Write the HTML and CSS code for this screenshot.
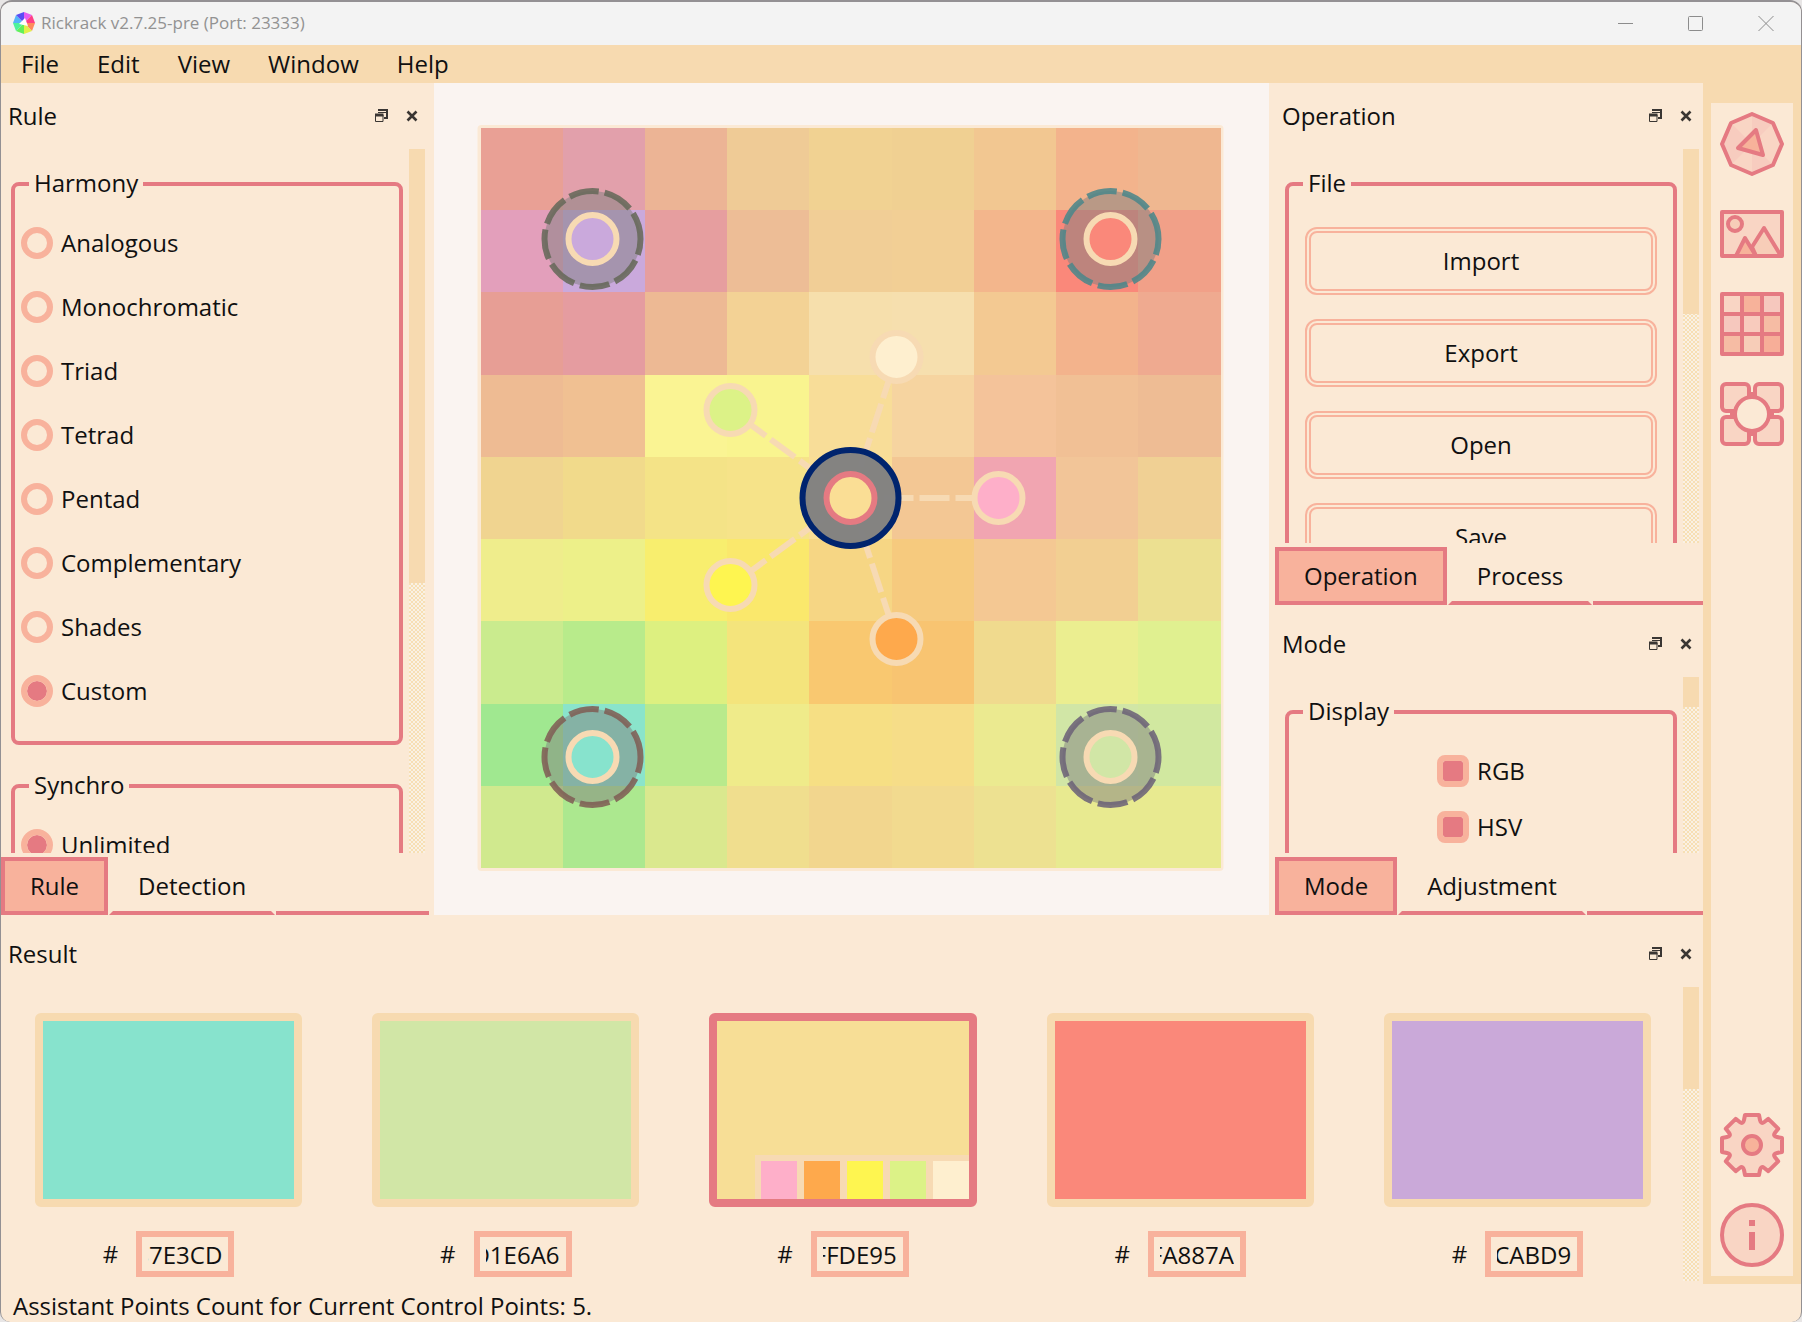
FILE: index.html
```html
<!DOCTYPE html>
<html lang="en">
<head>
<meta charset="utf-8">
<title>Rickrack v2.7.25-pre (Port: 23333)</title>
<link rel="stylesheet" href="styles.css">
</head>
<body>
<svg class="defs" aria-hidden="true">
  <symbol id="float" viewBox="0 0 14 14"><path d="M4 1h9v8h-3" fill="none" stroke="#3a3633" stroke-width="2"/><path d="M4 3.500h9" stroke="#3a3633" stroke-width="1"/><path d="M1.500 6h7.500v6.500H1.500z" fill="none" stroke="#3a3633" stroke-width="1"/><path d="M1 6h8.500" stroke="#3a3633" stroke-width="3"/></symbol>
  <symbol id="close" viewBox="0 0 14 14"><path d="M2.500 2.500l9 9M11.500 2.500l-9 9" stroke="#3a3633" stroke-width="2.600" fill="none"/></symbol>
</svg>
<div class="window">
  <header class="titlebar">
    <svg class="app-icon" viewBox="-12 -12 24 24" aria-hidden="true">
      <path d="M0 0L0-11 8-8Z" fill="#e75cf0"/><path d="M0 0L8-8 11 0Z" fill="#ff3f86"/><path d="M0 0L11 0 8 8Z" fill="#ff8a5c"/><path d="M0 0L8 8 0 11Z" fill="#e2f04a"/><path d="M0 0L0 11-8 8Z" fill="#62f05a"/><path d="M0 0L-8 8-11 0Z" fill="#4df29a"/><path d="M0 0L-11 0-8-8Z" fill="#55b4f8"/><path d="M0 0L-8-8 0-11Z" fill="#5a4cf5"/>
      <path d="M1-5L4 3-5 1Z" fill="#fff"/>
    </svg>
    <h1 class="title">Rickrack v2.7.25-pre (Port: 23333)</h1>
    <button class="win-btn" aria-label="Minimize"><svg viewBox="0 0 16 16"><path d="M0 8.500h15"/></svg></button>
    <button class="win-btn" aria-label="Maximize"><svg viewBox="0 0 16 16"><rect x=".5" y="1.500" width="14" height="14" rx="1"/></svg></button>
    <button class="win-btn" aria-label="Close"><svg viewBox="0 0 16 16"><path d="M.5 1l15 15M15.500 1L.5 16"/></svg></button>
  </header>
  <nav class="menubar">
    <button>File</button><button>Edit</button><button>View</button><button>Window</button><button>Help</button>
  </nav>
  <main class="main">
    <section class="dock dock-left">
      <div class="panel grow">
        <header class="panel-head"><h2>Rule</h2><button aria-label="Float"><svg><use href="#float"/></svg></button><button aria-label="Close"><svg><use href="#close"/></svg></button></header>
        <div class="scroll">
          <div class="content">
            <fieldset class="radios">
              <legend>Harmony</legend>
              <label><input type="radio" name="harmony">Analogous</label>
              <label><input type="radio" name="harmony">Monochromatic</label>
              <label><input type="radio" name="harmony">Triad</label>
              <label><input type="radio" name="harmony">Tetrad</label>
              <label><input type="radio" name="harmony">Pentad</label>
              <label><input type="radio" name="harmony">Complementary</label>
              <label><input type="radio" name="harmony">Shades</label>
              <label><input type="radio" name="harmony" checked>Custom</label>
            </fieldset>
            <fieldset class="radios">
              <legend>Synchro</legend>
              <label><input type="radio" name="synchro" checked>Unlimited</label>
            </fieldset>
          </div>
          <div class="track"><div class="thumb" style="height:61.600%"></div></div>
        </div>
        <div class="tabs"><button class="active">Rule</button><button>Detection</button><span></span></div>
      </div>
    </section>

    <section class="canvas">
      <svg class="board" viewBox="0 0 746 746" aria-label="Colour board">
        <rect width="746" height="746" rx="4" fill="#fbe9d5"/>
        <g id="cells" shape-rendering="crispEdges"></g>
        <g transform="translate(373 373)">
          <g class="spokes"><path d="M0 0H148"/><path d="M0 0L46-141"/><path d="M0 0L46 141"/><path d="M0 0L-120-88"/><path d="M0 0L-120 88"/></g>
          <g class="point"><circle cx="148" r="24" fill="#feafc9"/><circle cx="46" cy="-141" r="24" fill="#feefcf"/><circle cx="46" cy="141" r="24" fill="#fea94c"/><circle cx="-120" cy="-88" r="24" fill="#dcf287"/><circle cx="-120" cy="87" r="24" fill="#fef550"/></g>
          <circle r="48" fill="#808080" fill-opacity=".97" stroke="#00246e" stroke-width="6"/>
          <circle r="24" fill="#fade95" stroke="#e57a82" stroke-width="6"/>
          <g class="control" transform="translate(-258 -259)"><circle r="48"/><path d="M48 0A48 48 0 1 0-48 0A48 48 0 1 0 48 0" stroke="#66695a"/><circle class="core" r="24" fill="#caa9dc"/></g>
          <g class="control" transform="translate(260 -259)"><circle r="48"/><path d="M48 0A48 48 0 1 0-48 0A48 48 0 1 0 48 0" stroke="#4c868a"/><circle class="core" r="24" fill="#fa887a"/></g>
          <g class="control" transform="translate(-258 259)"><circle r="48"/><path d="M48 0A48 48 0 1 0-48 0A48 48 0 1 0 48 0" stroke="#805f55"/><circle class="core" r="24" fill="#87e3cd"/></g>
          <g class="control" transform="translate(260 259)"><circle r="48"/><path d="M48 0A48 48 0 1 0-48 0A48 48 0 1 0 48 0" stroke="#6c6378"/><circle class="core" r="24" fill="#d1e6a6"/></g>
        </g>
      </svg>
    </section>

    <section class="dock dock-right">
      <div class="panel grow">
        <header class="panel-head"><h2>Operation</h2><button aria-label="Float"><svg><use href="#float"/></svg></button><button aria-label="Close"><svg><use href="#close"/></svg></button></header>
        <div class="scroll">
          <div class="content">
            <fieldset class="actions">
              <legend>File</legend>
              <button>Import</button><button>Export</button><button>Open</button><button>Save</button>
            </fieldset>
          </div>
          <div class="track"><div class="thumb" style="height:42%"></div></div>
        </div>
        <div class="tabs"><button class="active">Operation</button><button>Process</button><span></span></div>
      </div>
      <div class="panel mode">
        <header class="panel-head"><h2>Mode</h2><button aria-label="Float"><svg><use href="#float"/></svg></button><button aria-label="Close"><svg><use href="#close"/></svg></button></header>
        <div class="scroll">
          <div class="content">
            <fieldset class="checks">
              <legend>Display</legend>
              <label><input type="checkbox" checked>RGB</label>
              <label><input type="checkbox" checked>HSV</label>
            </fieldset>
          </div>
          <div class="track"><div class="thumb" style="height:17%"></div></div>
        </div>
        <div class="tabs"><button class="active">Mode</button><button>Adjustment</button><span></span></div>
      </div>
    </section>

    <section class="panel result">
      <header class="panel-head"><h2>Result</h2><button aria-label="Float"><svg><use href="#float"/></svg></button><button aria-label="Close"><svg><use href="#close"/></svg></button></header>
      <div class="scroll">
        <div class="cards">
          <div class="card"><div class="swatch teal"></div><label># <input value="87E3CD"></label></div>
          <div class="card"><div class="swatch lime"></div><label># <input value="D1E6A6"></label></div>
          <div class="card"><div class="swatch sand selected"><div class="strip"><i class="pink"></i><i class="orange"></i><i class="yellow"></i><i class="green"></i><i class="cream"></i></div></div><label># <input value="FFDE95"></label></div>
          <div class="card"><div class="swatch coral"></div><label># <input value="FA887A"></label></div>
          <div class="card"><div class="swatch violet"></div><label># <input value="CCABD9"></label></div>
        </div>
        <div class="track"><div class="thumb" style="height:34.700%"></div></div>
      </div>
    </section>

    <aside class="toolbar">
      <button aria-label="Wheel"><svg viewBox="-32 -32 64 64">
        <path d="M0-30L21-21 30 0 21 21 0 30-21 21-30 0-21-21Z" fill="#f9d5c4"/>
        <path d="M0 0L0-30 21-21ZM0 0L-30 0-21-21ZM0 0L0 30 21 21ZM0 0L-30 0-21 21Z" fill="#f6c8be" opacity=".75"/>
        <path class="line" d="M0-30L21-21 30 0 21 21 0 30-21 21-30 0-21-21Z"/>
        <path class="line deep" d="M4-14L-14 4 11 11Z"/></svg></button>
      <button aria-label="Image"><svg viewBox="-32 -32 64 64">
        <rect class="line pale" x="-30" y="-22" width="60" height="44"/>
        <circle class="line mid" cx="-17" cy="-10" r="7"/>
        <path class="line mid" d="M0 13L12-6 29 22H4Z"/><path class="line deep" d="M-16 22L-7 4 4 22Z"/></svg></button>
      <button aria-label="Board"><svg viewBox="-32 -32 64 64">
        <path d="M-30-30h20v20h-20z" fill="#f9d5c4"/><path d="M-10-30h20v20h-20z" fill="#f7b29a"/><path d="M10-30h20v20h-20z" fill="#f6c8be"/>
        <path d="M-30-10h20v20h-20z" fill="#f6c8be"/><path d="M-10-10h20v20h-20z" fill="#f8cbbd"/><path d="M10-10h20v20h-20z" fill="#f6bca4"/>
        <path d="M-30 10h20v20h-20z" fill="#f6bca4"/><path d="M-10 10h20v20h-20z" fill="#f7cdb8"/><path d="M10 10h20v20h-20z" fill="#f7ae98"/>
        <path class="line" d="M-30-30H30V30H-30ZM-10-30V30M10-30V30M-30-10H30M-30 10H30"/></svg></button>
      <button aria-label="Depot"><svg viewBox="-32 -32 64 64">
        <g class="line pale"><rect x="-30" y="-30" width="27" height="27" rx="4"/><rect x="3" y="-30" width="27" height="27" rx="4"/><rect x="-30" y="3" width="27" height="27" rx="4"/><rect x="3" y="3" width="27" height="27" rx="4"/></g>
        <path class="line" d="M0-22V-18M0 18V22M-22 0H-18M18 0H22"/>
        <circle class="line base" r="17"/></svg></button>
      <span class="spacer"></span>
      <button aria-label="Settings"><svg viewBox="-32 -32 64 64">
        <path class="line pale" d="M-7-30L7-30 8-25Q9-20.500 12.300-23L16.300-26.200 26.200-16.300 23-12.300Q20.500-9 25-8L30-7 30 7 25 8Q20.500 9 23 12.300L26.200 16.300 16.300 26.200 12.300 23Q9 20.500 8 25L7 30-7 30-8 25Q-9 20.500-12.300 23L-16.300 26.200-26.200 16.300-23 12.300Q-20.500 9-25 8L-30 7-30-7-25-8Q-20.500-9-23-12.300L-26.200-16.300-16.300-26.200-12.300-23Q-9-20.500-8-25Z"/>
        <circle class="line deep" r="9"/></svg></button>
      <button aria-label="About"><svg viewBox="-32 -32 64 64">
        <circle class="line pale" r="30"/><path d="M-3-15h6v6h-6zM-3-3h6v18h-6z" fill="#e57a82"/></svg></button>
    </aside>
  </main>
  <footer class="status">Assistant Points Count for Current Control Points: 5.</footer>
</div>
<script src="app.js"></script>
</body>
</html>
```
FILE: styles.css
```css
:root {
  --base: #fbe9d5;
  --sand: #f7dab0;
  --peach: #f8b29c;
  --rose: #e57a82;
}
* { box-sizing: border-box; }
body {
  margin: 0;
  background: #e8e6e6;
  color: #101010;
  font: 24px/32px "Open Sans", "Noto Sans", sans-serif;
}
button, input { font: inherit; color: inherit; }
button { padding: 0; border: 0; background: none; }
h1, h2 { margin: 0; font-size: inherit; font-weight: 400; }
.defs { display: none; }

.window {
  display: flex;
  flex-direction: column;
  height: 100vh;
  min-height: 900px;
  border: 1px solid #939093;
  border-top-width: 2px;
  border-bottom: 0;
  border-radius: 12px 12px 10px 10px;
  background: var(--base);
  overflow: hidden;
}

.titlebar {
  display: flex;
  align-items: center;
  flex: none;
  height: 43px;
  padding: 0 0 2px 11px;
  background: #f3f3f3;
}
.app-icon { width: 24px; height: 24px; margin-right: 5px; }
.title { flex: 1; font-size: 17px; line-height: 24px; color: #929292; }
.win-btn { display: grid; place-items: center; width: 70px; height: 40px; }
.win-btn svg { width: 16px; height: 16px; overflow: visible; fill: none; stroke: #8c8c8c; stroke-width: 1; }

.menubar {
  display: flex;
  flex: none;
  height: 38px;
  padding-left: 1px;
  background: var(--sand);
}
.menubar button { padding: 0 19px; }

.main {
  flex: 1;
  min-height: 0;
  display: grid;
  grid-template-columns: 433px minmax(0, 1fr) 434px 98px;
  grid-template-rows: minmax(0, 1fr) 369px;
}
.dock { display: flex; flex-direction: column; gap: 6px; min-height: 0; }
.dock-left { padding-right: 5px; }
.dock-right { padding-left: 6px; }
.panel { display: flex; flex-direction: column; min-height: 0; }
.grow { flex: 1; }
.mode { flex: none; height: 304px; }

.panel-head {
  display: flex;
  align-items: center;
  flex: none;
  height: 66px;
  padding: 0 10px 0 7px;
}
.panel-head h2 { flex: 1; }
.panel-head button { display: grid; place-items: center; width: 14px; height: 14px; margin-left: 17px; }
.panel-head svg { width: 14px; height: 14px; }

.scroll { display: flex; flex: 1; min-height: 0; padding-right: 4px; overflow: hidden; }
.content { flex: 1; padding: 19px 6px 0 10px; }
.track {
  width: 16px;
  background: repeating-conic-gradient(#f7dfb4 0 25%, #faf1e4 0 50%) 0 0 / 4px 4px;
}
.thumb { background: var(--sand); }

fieldset {
  display: flex;
  flex-direction: column;
  min-width: 0;
  margin: 0 0 25px;
  padding: 27px 6px 34px;
  border: 4px solid var(--rose);
  border-radius: 8px;
}
legend { margin-left: 8px; padding: 0 5px 2px; line-height: 30px; }
fieldset label { display: flex; align-items: center; gap: 8px; height: 32px; }
.radios { gap: 32px; }
.actions { gap: 24px; padding-left: 16px; padding-right: 16px; }
.actions legend { margin-left: -2px; }
.actions button {
  height: 68px;
  flex: none;
  border: 6px double var(--peach);
  border-radius: 12px;
}
.checks { display: grid; justify-content: center; gap: 24px; padding-bottom: 80px; }
input[type="radio"], input[type="checkbox"] {
  appearance: none;
  width: 32px;
  height: 32px;
  margin: 0;
  border: 6px solid var(--peach);
  border-radius: 16px;
}
input[type="checkbox"] { border-radius: 8px; }
input:checked { background: var(--rose) padding-box; }

.tabs { display: flex; flex: none; gap: 1px; height: 58px; margin-top: 4px; }
.tabs button {
  padding: 0 25px;
  border: 4px solid transparent;
  border-bottom-color: var(--rose);
}
.tabs .active { border-color: var(--rose); background: var(--peach); }
.tabs span { flex: 1; border-bottom: 4px solid var(--rose); }

.canvas { display: grid; padding: 42px 45px 44px 43px; background: #faf4f1; min-height: 0; }
.board { width: 100%; height: 100%; min-height: 0; }
.spokes { fill: none; stroke: #f7dab3; stroke-width: 6; stroke-dasharray: 30 6; stroke-dashoffset: 3; }
.point circle, .control .core { stroke: #f7dab3; stroke-width: 6; }
.control > circle:first-child { fill: #808080; fill-opacity: .5; }
.control path { fill: none; stroke-width: 6; stroke-opacity: .88; stroke-dasharray: 30 6; stroke-dashoffset: 3; }

.result { grid-column: 1 / 4; grid-row: 2; padding: 6px 0 3px; }
.cards {
  flex: 1;
  display: grid;
  grid-template-columns: repeat(5, minmax(0, 1fr));
  gap: 70px;
  padding: 26px 32px 0 34px;
}
.card { display: flex; flex-direction: column; align-items: center; gap: 24px; }
.swatch {
  display: flex;
  align-items: flex-end;
  justify-content: flex-end;
  width: 100%;
  height: 194px;
  flex: none;
  border: 8px solid var(--sand);
  border-radius: 6px;
}
.selected { border-color: var(--rose); }
.teal { background: #87e3cd padding-box; }
.lime { background: #d1e6a6 padding-box; }
.sand { background: #f7de96 padding-box; }
.coral { background: #fa887a padding-box; }
.violet { background: #caa9d9 padding-box; }
.strip {
  display: grid;
  grid-template-columns: repeat(5, 36px);
  gap: 7px;
  height: 44px;
  padding: 6px 0 0 6px;
  background: #f7dab3;
}
.pink { background: #feafc9; }
.orange { background: #fea94c; }
.yellow { background: #fef550; }
.green { background: #dcf287; }
.cream { background: #feefcf; }
.card label { display: flex; align-items: center; gap: 18px; }
.card input {
  width: 98px;
  height: 46px;
  padding: 0 6px;
  border: 6px solid var(--peach);
  background: none;
  direction: rtl;
}

.toolbar {
  grid-column: 4;
  grid-row: 1 / 3;
  display: flex;
  flex-direction: column;
  gap: 8px;
  border: solid var(--sand);
  border-width: 20px 8px 8px;
  background: var(--base);
}
.toolbar button { display: grid; place-items: center; height: 82px; flex: none; }
.toolbar svg { width: 64px; height: 64px; }
.spacer { flex: 1; }
.line { fill: none; stroke: var(--rose); stroke-width: 4; stroke-linejoin: round; }
.pale { fill: #f9d5c4; }
.mid { fill: #f7cdb8; }
.deep { fill: #f7b29a; }
.base { fill: var(--base); }

.status { flex: none; height: 38px; padding: 6px 12px 0; }
```
FILE: app.js
```js
const rows = [
  "e9a095 e2a0ab ecb495 efcb96 f1d292 f0d092 f2c791 f3b38c efb790",
  "e39fbb caa9dc e69e9f edbd96 f1ce96 f2cf95 f3b68c fa887a f1a088",
  "e79e95 e59ca0 edb994 f3d295 f6dfac f6dfae f3c992 f3b38c efaa90",
  "eebb93 f0c092 faf493 f9f48f f8dd98 f6d4a0 f4c39a f1c095 eebc94",
  "f0d490 f1da8b f4e387 f6e389 fade95 f3c794 f1a5b1 f2c598 f0d094",
  "efed8c edf089 f8ee6e fae86c f6d684 f6ca7e f4c893 f2cf92 ece091",
  "caeb8e b8eb8b ddf080 f4e47c f9c870 f8c471 f0da8e ebee90 e0f090",
  "a0e890 8ae4cb b8ea8c efeb8a f6df84 f6dd88 ebea90 d1e6a6 d1e8a0",
  "d0e98e ace88f dae88e f0de8e f2d68e f2da8f ede191 e8ea90 e8ea90"
];
const size = 740 / 9;
const cells = document.getElementById("cells");
rows.forEach((row, y) => row.split(" ").forEach((color, x) => {
  const cell = document.createElementNS("http://www.w3.org/2000/svg", "rect");
  cell.setAttribute("x", 3 + x * size);
  cell.setAttribute("y", 3 + y * size);
  cell.setAttribute("width", size);
  cell.setAttribute("height", size);
  cell.setAttribute("fill", "#" + color);
  cells.append(cell);
}));
```
